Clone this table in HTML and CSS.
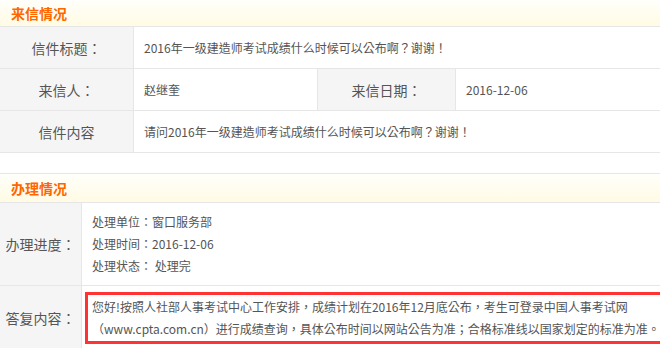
FILE: index.html
```html
<!DOCTYPE html>
<html lang="zh-TW">
<head>
<meta charset="utf-8">
<title>来信情况</title>
<link rel="stylesheet" href="styles.css">
</head>
<body>
<div class="page">
  <div class="section-head head-first">来信情况</div>
  <div class="row row-two">
    <div class="label">信件标题：</div>
    <div class="value">2016年一级建造师考试成绩什么时候可以公布啊？谢谢！</div>
  </div>
  <div class="row row-four">
    <div class="label">来信人：</div>
    <div class="value">赵继奎</div>
    <div class="label">来信日期：</div>
    <div class="value">2016-12-06</div>
  </div>
  <div class="row row-two">
    <div class="label">信件内容</div>
    <div class="value">请问2016年一级建造师考试成绩什么时候可以公布啊？谢谢！</div>
  </div>

  <div class="spacer"></div>

  <div class="section-head head-second">办理情况</div>
  <div class="row row-narrow">
    <div class="label">办理进度：</div>
    <div class="value multi">
      <div>处理单位：窗口服务部</div>
      <div>处理时间：2016-12-06</div>
      <div>处理状态： 处理完</div>
    </div>
  </div>
  <div class="row row-narrow">
    <div class="label">答复内容：</div>
    <div class="value reply-cell">
      <div class="reply">您好!按照人社部人事考试中心工作安排，成绩计划在2016年12月底公布，考生可登录中国人事考试网<br>（www.cpta.com.cn）进行成绩查询，具体公布时间以网站公告为准；合格标准线以国家划定的标准为准。</div>
    </div>
  </div>
</div>
</body>
</html>
```

FILE: styles.css
```css
html, body {
  margin: 0;
  padding: 0;
  background: #fff;
}

body {
  font-family: "Noto Sans CJK TC", sans-serif;
  color: #555;
  font-size: 12px;
}

.page {
  width: 660px;
}

.section-head {
  display: flex;
  align-items: center;
  padding-left: 11px;
  font-size: 14px;
  font-weight: bold;
  color: #ff6600;
  background: linear-gradient(#fffffb, #fffbe4);
  border-bottom: 1px solid #e6e6e6;
}

.head-first {
  height: 26px;
}

.head-second {
  height: 28px;
  border-top: 1px solid #e6e6e6;
}

.spacer {
  height: 20px;
}

.row {
  display: grid;
  border-bottom: 1px solid #e6e6e6;
  min-height: 41px;
}

.row-two {
  grid-template-columns: 134px 1fr;
}

.row-four {
  grid-template-columns: 134px 184px 138px 1fr;
}

.row-narrow {
  grid-template-columns: 82px 1fr;
}

.label {
  display: flex;
  align-items: center;
  justify-content: center;
  background: #f5f5f5;
  border-right: 1px solid #e6e6e6;
  font-size: 14px;
  color: #555;
}

.value {
  display: flex;
  align-items: center;
  padding-left: 10px;
  background: #fff;
}

.row-four .value:nth-child(2) {
  border-right: 1px solid #e6e6e6;
}

.multi {
  flex-direction: column;
  align-items: flex-start;
  justify-content: center;
  line-height: 22px;
  padding-top: 8px;
  padding-bottom: 8px;
}

.reply-cell {
  padding: 6px 3px 6px 3px;
}

.reply {
  width: 100%;
  border: 3px solid #ff3333;
  padding: 1px 0 1px 4px;
  line-height: 22px;
  white-space: nowrap;
}
```
